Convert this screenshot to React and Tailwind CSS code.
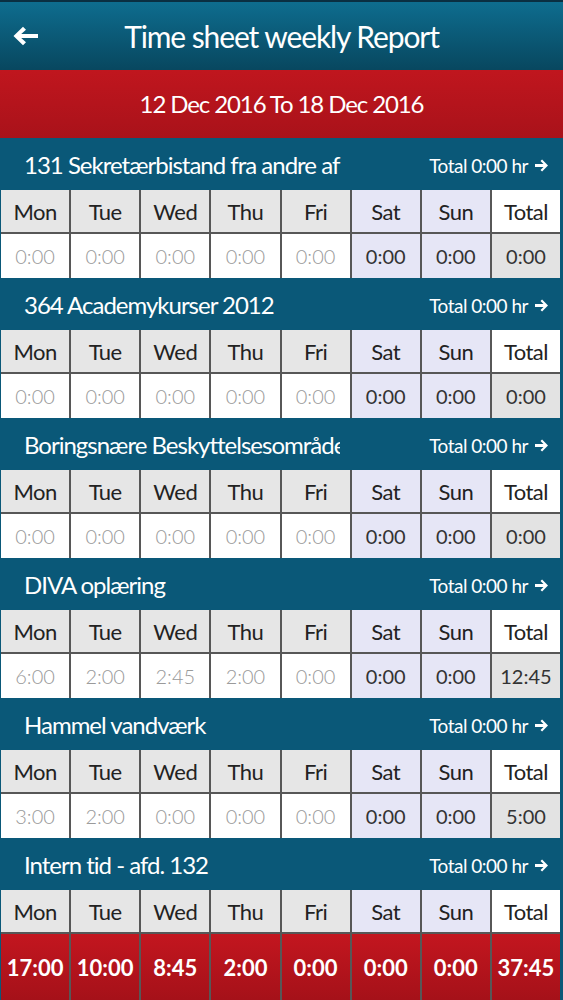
import React from "react";

const FONT = { fontFamily: 'Lato, "Liberation Sans", sans-serif' };

const days = ["Mon", "Tue", "Wed", "Thu", "Fri", "Sat", "Sun", "Total"];

const sections = [
  { name: "131 Sekretærbistand fra andre af", vals: ["0:00", "0:00", "0:00", "0:00", "0:00", "0:00", "0:00", "0:00"] },
  { name: "364 Academykurser 2012", vals: ["0:00", "0:00", "0:00", "0:00", "0:00", "0:00", "0:00", "0:00"] },
  { name: "Boringsnære Beskyttelsesområder", clip: true, vals: ["0:00", "0:00", "0:00", "0:00", "0:00", "0:00", "0:00", "0:00"] },
  { name: "DIVA oplæring", vals: ["6:00", "2:00", "2:45", "2:00", "0:00", "0:00", "0:00", "12:45"] },
  { name: "Hammel vandværk", vals: ["3:00", "2:00", "0:00", "0:00", "0:00", "0:00", "0:00", "5:00"] },
];

function RightArrow() {
  return (
    <svg width="15" height="13" viewBox="0 0 15 13" className="ml-[6px]">
      <path d="M1 5h8.5L6.5 2l1.6-1.6L14 6.5l-5.9 6.1-1.6-1.6 3-3H1z" fill="white" />
    </svg>
  );
}

function TitleBar({ name, clip }) {
  return (
    <div className="h-[52px] pt-[2px] flex items-center justify-between pl-[24px] pr-[14px] text-white">
      <div
        className={
          "whitespace-nowrap text-[24px] leading-[30px] tracking-[-1px] " +
          (clip ? "w-[316px] overflow-hidden" : "")
        }
      >
        {name}
      </div>
      <div className="flex items-center text-[19px] leading-none tracking-[-0.5px]">
        <span>Total 0:00 hr</span>
        <RightArrow />
      </div>
    </div>
  );
}

function HeaderRow() {
  return (
    <>
      {days.map((d, i) => (
        <div
          key={d}
          className={
            "h-[42px] flex items-center justify-center text-[22px] tracking-[-0.5px] text-[#222] " +
            (i < 5 ? "bg-[#e6e6e6]" : i < 7 ? "bg-[#e6e6f6]" : "bg-white")
          }
        >
          {d}
        </div>
      ))}
    </>
  );
}

function Section({ name, vals, clip }) {
  return (
    <div>
      <TitleBar name={name} clip={clip} />
      <div className="ml-[1px] mr-[3px] grid grid-cols-8 gap-[2px] bg-[#575757]">
        <HeaderRow />
        {vals.map((v, i) => (
          <div
            key={i}
            className={
              "h-[44px] flex items-center justify-center text-[20px] " +
              (i < 5
                ? "bg-white text-[#9a9a9a] font-light"
                : i < 7
                ? "bg-[#e6e6f6] text-[#333]"
                : "bg-[#e3e3e3] text-[#333]")
            }
          >
            {v}
          </div>
        ))}
      </div>
    </div>
  );
}

export default function App() {
  const lastVals = ["17:00", "10:00", "8:45", "2:00", "0:00", "0:00", "0:00", "37:45"];
  return (
    <div className="w-[563px] h-[1000px] overflow-hidden bg-[#0a5878]" style={FONT}>
      <div className="h-[70px] border-t-[2px] border-[#0a2f42] bg-gradient-to-b from-[#0e6d8f] to-[#08475f] flex items-center relative">
        <svg width="26" height="20" viewBox="0 0 26 20" className="absolute left-[13px] top-[24px]">
          <path d="M0.5 10L10 0.8l3 3L8.2 8H25v4H8.2l4.8 4.2-3 3z" fill="white" />
        </svg>
        <div className="w-full text-center text-white text-[30px] leading-none tracking-[-1.1px]">Time sheet weekly Report</div>
      </div>
      <div className="h-[68px] bg-gradient-to-b from-[#c0161e] to-[#a9121a] flex items-center justify-center text-white text-[24px] leading-none tracking-[-1.1px]">
        12 Dec 2016 To 18 Dec 2016
      </div>
      {sections.map((s) => (
        <Section key={s.name} {...s} />
      ))}
      <div>
        <TitleBar name="Intern tid - afd. 132" />
        <div className="ml-[1px] mr-[3px] grid grid-cols-8 gap-[2px] bg-[#575757]">
          <HeaderRow />
          {lastVals.map((v, i) => (
            <div
              key={i}
              className="h-[66px] flex items-center justify-center text-[22px] font-bold text-white bg-gradient-to-b from-[#c3161f] to-[#a51119]"
            >
              {v}
            </div>
          ))}
        </div>
      </div>
    </div>
  );
}
